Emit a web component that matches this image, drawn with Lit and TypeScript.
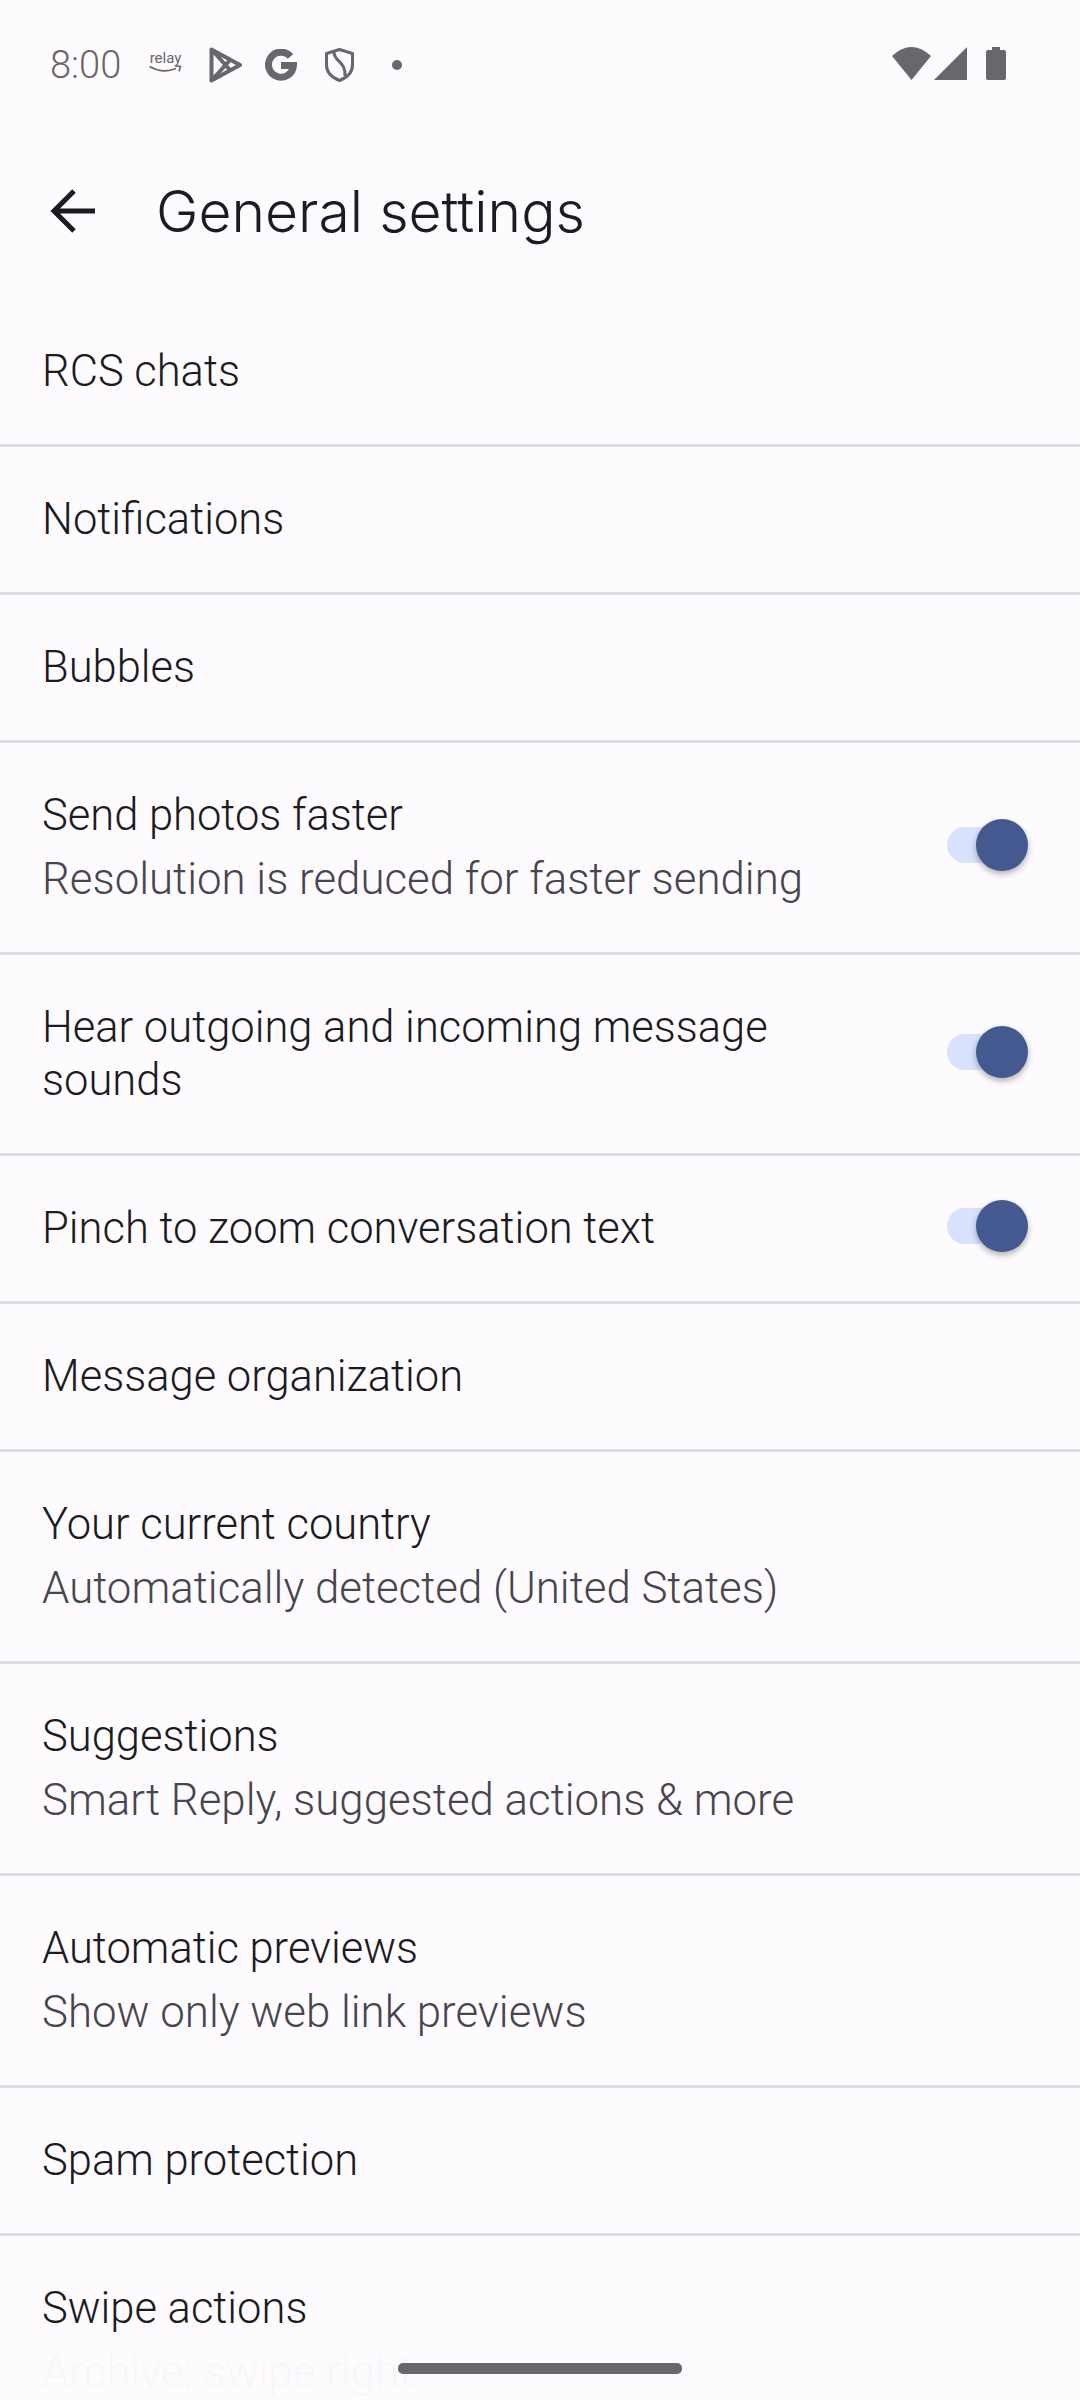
import { LitElement, html, css } from "lit";
import { customElement } from "lit/decorators.js";

interface Row { t: string; s?: string; toggle?: boolean; h: number; cls?: string }
const rows: Row[] = [
  { t: "RCS chats", h: 148 },
  { t: "Notifications", h: 148 },
  { t: "Bubbles", h: 148 },
  { t: "Send photos faster", s: "Resolution is reduced for faster sending", toggle: true, h: 212 },
  { t: "Hear outgoing and incoming message sounds", toggle: true, h: 201 },
  { t: "Pinch to zoom conversation text", toggle: true, h: 148 },
  { t: "Message organization", h: 148 },
  { t: "Your current country", s: "Automatically detected (United States)", h: 212 },
  { t: "Suggestions", s: "Smart Reply, suggested actions & more", h: 212 },
  { t: "Automatic previews", s: "Show only web link previews", h: 212 },
  { t: "Spam protection", h: 148 },
  { t: "Swipe actions", s: "Archive: swipe right", h: 212, cls: "fade" },
];

@customElement("app-root")
export class AppRoot extends LitElement {
  static styles = css`
    :host { display: block; width: 1080px; height: 2400px; overflow: hidden; position: relative; background: #fefbff; font-family: Roboto, "Liberation Sans", sans-serif; color: #1c1b1f; }
    .status { height: 128px; display: flex; align-items: center; padding: 2px 74px 0 50px; box-sizing: border-box; color: #69676c; }
    .time { font-size: 38px; font-weight: 300; width: 99px; flex: none; }
    .relay { width: 33px; flex: none; display: flex; flex-direction: column; align-items: center; font-size: 15px; line-height: 15px; height: 28px; }
    .relay svg { display: block; margin-top: -1px; }
    .ico { display: block; flex: none; }
    .play { margin-left: 27px; }
    .g { margin-left: 23px; }
    .shield { margin-left: 28px; }
    .dot { margin-left: 38px; }
    .wifi { margin-top: -3px; }
    .signal { margin-left: 3px; margin-top: -3px; }
    .battery { margin-left: 19px; margin-top: -3px; }
    .spacer { flex: 1; }
    .appbar { height: 166px; display: flex; align-items: center; }
    .back { width: 48px; height: 48px; margin-left: 48px; flex: none; }
    .title { font-size: 57px; margin-left: 60px; font-family: Inter, Roboto, sans-serif; font-weight: 300; }
    .list { margin-top: 5px; }
    .row { box-sizing: border-box; border-bottom: 3px solid #dedce0; display: flex; align-items: center; padding: 0 52px 0 42px; }
    .text { flex: 1; min-width: 0; padding-right: 130px; }
    .text.two { margin-bottom: 2px; }
    .t { font-size: 43.5px; line-height: 53px; font-weight: 300; }
    .s { font-size: 43.8px; line-height: 52px; font-weight: 300; color: #49454f; margin-top: 11px; }
    .fade { align-items: flex-start; padding-top: 46px; border-bottom: none; }
    .fade .s { color: #f8f6f8; }
    .toggle { width: 81px; height: 52px; position: relative; flex: none; margin-bottom: 5px; }
    .track { position: absolute; left: 0; top: 8px; width: 70px; height: 36px; border-radius: 18px; background: #d8e2fc; }
    .thumb { position: absolute; right: 0; top: 0; width: 52px; height: 52px; border-radius: 50%; background: #44598f; box-shadow: 0 3px 6px rgba(0,0,0,.3); }
    .pill { position: absolute; left: 398px; top: 2363px; width: 284px; height: 11px; border-radius: 5px; background: #69676c; }
  `;

  render() {
    const c = "#69676c";
    return html`
      <div class="status">
        <span class="time">8:00</span>
        <span class="relay">
          <span>relay</span>
          <svg width="33" height="9" viewBox="0 0 33 9"><path d="M0.5 1.5 Q14 9 27 3.5 M26 1 L31.5 1.5 L30 6.5" fill="none" stroke="${c}" stroke-width="1.6"/></svg>
        </span>
        <svg class="ico play" width="33" height="36" viewBox="0 0 33 36"><path d="M2.5 2.5 L31 18 L2.5 33.5 Z M2.5 2.5 L21.5 23.5 M2.5 33.5 L21.5 12.5" fill="none" stroke="${c}" stroke-width="4" stroke-linejoin="round"/></svg>
        <svg class="ico g" width="32" height="32" viewBox="0 0 32 32"><path d="M25.5 7.5 A12.5 12.5 0 1 0 28.5 16.5 H16" fill="none" stroke="${c}" stroke-width="7"/></svg>
        <svg class="ico shield" width="29" height="34" viewBox="0 0 29 34"><path d="M14.5 1.5 L27.5 5.5 V17 C27.5 25 21 30 14.5 32.5 C8 30 1.5 25 1.5 17 V5.5 Z" fill="none" stroke="${c}" stroke-width="3" stroke-linejoin="round"/><path d="M9 4 C9 14 21 13 20 28" fill="none" stroke="${c}" stroke-width="3"/></svg>
        <svg class="ico dot" width="10" height="10" viewBox="0 0 10 10"><circle cx="5" cy="5" r="5" fill="${c}"/></svg>
        <span class="spacer"></span>
        <svg class="ico wifi" width="39" height="33" viewBox="0 0 39 33"><path d="M0 9 Q19.5 -9 39 9 L19.5 33 Z" fill="${c}"/></svg>
        <svg class="ico signal" width="33" height="33" viewBox="0 0 33 33"><path d="M33 0 V33 H0 Z" fill="${c}"/></svg>
        <svg class="ico battery" width="20" height="33" viewBox="0 0 20 33"><path d="M6 0 H14 V3 H18 Q20 3 20 5 V31 Q20 33 18 33 H2 Q0 33 0 31 V5 Q0 3 2 3 H6 Z" fill="${c}"/></svg>
      </div>
      <div class="appbar">
        <svg class="back" viewBox="0 0 48 48"><path d="M47 24 H7 M26 4 L6 24 L26 44" fill="none" stroke="#1c1b1f" stroke-width="5"/></svg>
        <span class="title">General settings</span>
      </div>
      <div class="list">
        ${rows.map(r => html`
          <div class="row ${r.cls ?? ""}" style="height:${r.h}px">
            <div class="text ${r.s && !r.cls ? "two" : ""}">
              <div class="t">${r.t}</div>
              ${r.s ? html`<div class="s">${r.s}</div>` : ""}
            </div>
            ${r.toggle ? html`<div class="toggle"><div class="track"></div><div class="thumb"></div></div>` : ""}
          </div>`)}
      </div>
      <div class="pill"></div>
    `;
  }
}
